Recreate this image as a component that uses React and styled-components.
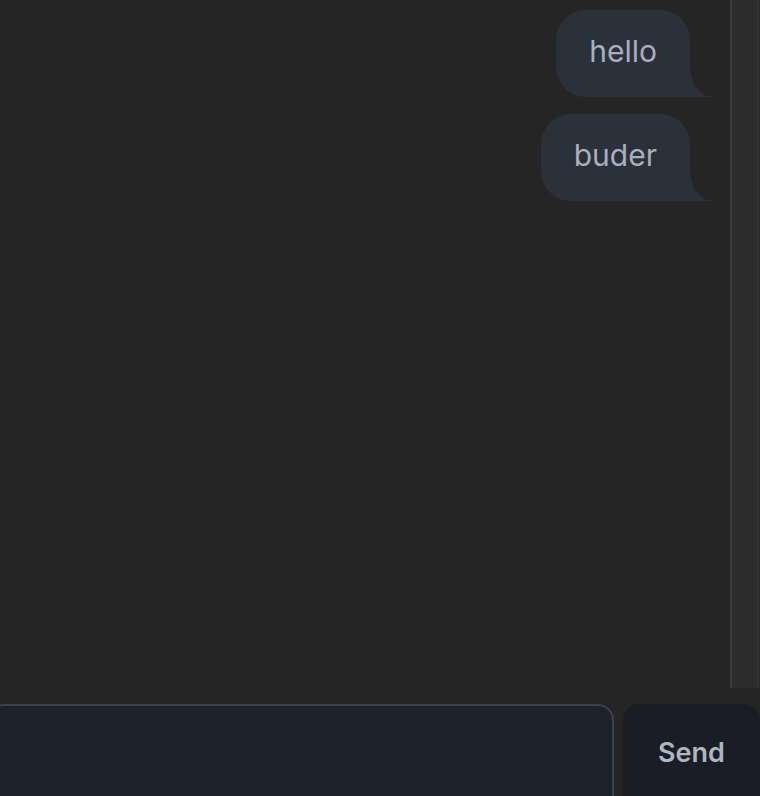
import React, { useState } from 'react';
import styled, { createGlobalStyle } from 'styled-components';

const GlobalStyle = createGlobalStyle`
  html, body {
    margin: 0;
    padding: 0;
    background: #252525;
    overflow: hidden;
    font-family: 'Inter', 'Noto Sans', sans-serif;
  }
`;

const messages = [
  { id: 1, text: 'hello' },
  { id: 2, text: 'buder' },
];

const Chat = () => {
  const [draft, setDraft] = useState('');

  return (
    <>
      <GlobalStyle />
      <Page>
        <ScrollArea>
          <MessageList>
            {messages.map((m) => (
              <Bubble key={m.id}>{m.text}</Bubble>
            ))}
          </MessageList>
          <ScrollTrack />
        </ScrollArea>
        <Composer onSubmit={(e) => e.preventDefault()}>
          <Input value={draft} onChange={(e) => setDraft(e.target.value)} />
          <SendButton type="submit">Send</SendButton>
        </Composer>
      </Page>
    </>
  );
};

const Page = styled.div`
  height: 100vh;
  display: flex;
  flex-direction: column;
  background: #252525;
`;

const ScrollArea = styled.div`
  height: 688px;
  flex-shrink: 0;
  display: flex;
`;

const MessageList = styled.div`
  flex: 1;
  overflow: hidden;
  display: flex;
  flex-direction: column;
  align-items: flex-end;
  gap: 17px;
  padding: 10px 40px 0 0;
`;

const ScrollTrack = styled.div`
  width: 30px;
  flex-shrink: 0;
  box-sizing: border-box;
  background: #2c2c2c;
  border-left: 2px solid #3b3b3b;
  border-right: 2px solid #2c2c2c;
  box-shadow: inset -1px 0 0 #373737;
`;

const Bubble = styled.div`
  position: relative;
  background: #2b313b;
  color: #a9b0bd;
  font-size: 30px;
  line-height: 45px;
  padding: 19px 33px 23px;
  border-radius: 30px 30px 0 30px;

  &::after {
    content: '';
    position: absolute;
    right: -22px;
    bottom: 0;
    width: 22px;
    height: 30px;
    background: radial-gradient(ellipse 22px 30px at 100% 0, transparent 98%, #2b313b 100%);
  }
`;

const Composer = styled.form`
  display: flex;
  gap: 9px;
  margin: 16px 0 0 -12px;
`;

const Input = styled.input`
  flex: 1;
  min-width: 0;
  height: 110px;
  box-sizing: border-box;
  background: #1e222b;
  border: 2px solid #3d424a;
  border-radius: 16px;
  color: #c4c9d2;
  font-family: inherit;
  font-size: 28px;
  outline: none;
`;

const SendButton = styled.button`
  width: 137px;
  height: 110px;
  flex-shrink: 0;
  background: #1a1d25;
  border: none;
  border-radius: 16px;
  color: #b0b5c0;
  font-family: inherit;
  font-size: 27px;
  font-weight: 600;
  padding: 0 0 14px;
  cursor: pointer;
`;

export default Chat;
